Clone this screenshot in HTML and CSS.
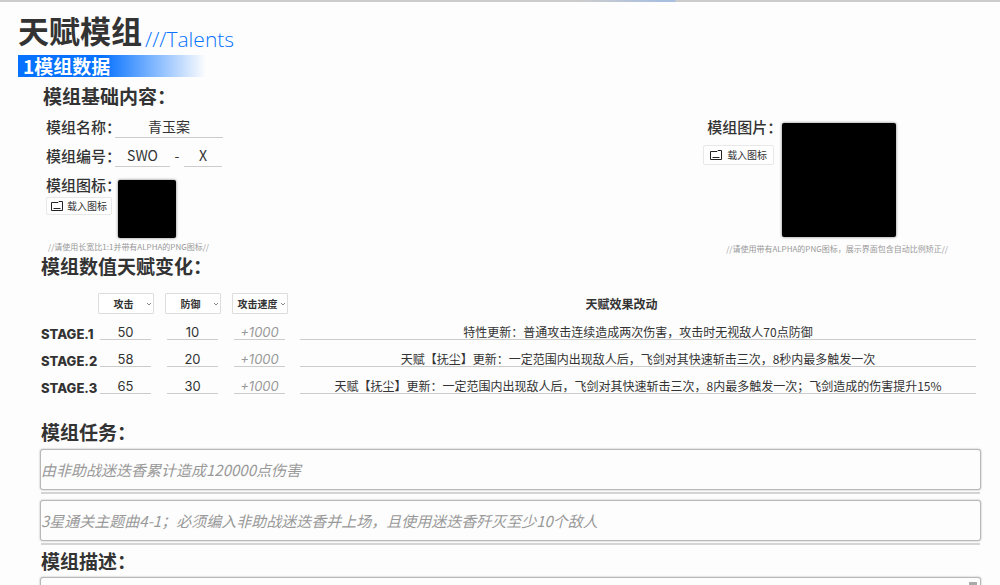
FILE: index.html
```html
<!DOCTYPE html>
<html lang="zh-CN">
<head>
<meta charset="utf-8">
<title>天赋模组</title>
<link rel="stylesheet" href="styles.css">
</head>
<body>
<div class="topline"></div>
<main class="page">
  <h1 class="title">天赋模组<span class="title-en">///Talents</span></h1>
  <h2 class="band">1模组数据</h2>

  <section class="basics">
    <div class="basics-left">
      <h3 class="heading heading-first">模组基础内容：</h3>
      <div class="field">
        <label class="label" for="name">模组名称：</label>
        <input class="line name" id="name" value="青玉案">
      </div>
      <div class="field">
        <label class="label" for="code">模组编号：</label>
        <input class="line code" id="code" value="SWO">
        <span class="dash">-</span>
        <input class="line suffix" aria-label="编号后缀" value="X">
      </div>
      <div class="upload">
        <div class="upload-side">
          <span class="label">模组图标：</span>
          <button class="load" type="button">
            <svg class="folder" viewBox="0 0 12 10"><path d="M.5 1.500h6.500l1-1h3.500v9h-11z"/><path d="M2.500 7.500h7" /></svg>载入图标
          </button>
        </div>
        <div class="preview small"></div>
      </div>
      <p class="note">//请使用长宽比1:1并带有ALPHA的PNG图标//</p>
    </div>

    <div class="basics-right">
      <div class="upload">
        <div class="upload-side wide">
          <span class="label">模组图片：</span>
          <button class="load roomy" type="button">
            <svg class="folder" viewBox="0 0 12 10"><path d="M.5 1.500h6.500l1-1h3.500v9h-11z"/><path d="M2.500 7.500h7" /></svg>载入图标
          </button>
        </div>
        <div class="preview large"></div>
      </div>
      <p class="note note-right">//请使用带有ALPHA的PNG图标，展示界面包含自动比例矫正//</p>
    </div>
  </section>

  <section class="block">
    <h3 class="heading heading-stats">模组数值天赋变化：</h3>
    <table class="stats">
      <thead>
        <tr>
          <td class="stage-col"></td>
          <th class="stat-col"><span class="pick"><select aria-label="属性一"><option>攻击</option></select><svg viewBox="0 0 6 4"><path d="M1 1l2 2 2-2"/></svg></span></th>
          <th class="stat-col"><span class="pick"><select aria-label="属性二"><option>防御</option></select><svg viewBox="0 0 6 4"><path d="M1 1l2 2 2-2"/></svg></span></th>
          <th class="stat-col"><span class="pick"><select aria-label="属性三"><option>攻击速度</option></select><svg viewBox="0 0 6 4"><path d="M1 1l2 2 2-2"/></svg></span></th>
          <th class="effect-head">天赋效果改动</th>
        </tr>
      </thead>
      <tbody>
        <tr>
          <th class="stage">STAGE.1</th>
          <td><input class="line stat" aria-label="阶段1 攻击" value="50"></td>
          <td><input class="line stat" aria-label="阶段1 防御" value="10"></td>
          <td><input class="line stat" aria-label="阶段1 攻击速度" placeholder="+1000"></td>
          <td class="effect-cell"><input class="line effect" aria-label="阶段1 天赋效果" value="特性更新：普通攻击连续造成两次伤害，攻击时无视敌人70点防御"></td>
        </tr>
        <tr>
          <th class="stage">STAGE.2</th>
          <td><input class="line stat" aria-label="阶段2 攻击" value="58"></td>
          <td><input class="line stat" aria-label="阶段2 防御" value="20"></td>
          <td><input class="line stat" aria-label="阶段2 攻击速度" placeholder="+1000"></td>
          <td class="effect-cell"><input class="line effect" aria-label="阶段2 天赋效果" value="天赋【抚尘】更新：一定范围内出现敌人后，飞剑对其快速斩击三次，8秒内最多触发一次"></td>
        </tr>
        <tr>
          <th class="stage">STAGE.3</th>
          <td><input class="line stat" aria-label="阶段3 攻击" value="65"></td>
          <td><input class="line stat" aria-label="阶段3 防御" value="30"></td>
          <td><input class="line stat" aria-label="阶段3 攻击速度" placeholder="+1000"></td>
          <td class="effect-cell"><input class="line effect" aria-label="阶段3 天赋效果" value="天赋【抚尘】更新：一定范围内出现敌人后，飞剑对其快速斩击三次，8内最多触发一次；飞剑造成的伤害提升15%"></td>
        </tr>
      </tbody>
    </table>
  </section>

  <section class="block tasks">
    <h3 class="heading">模组任务：</h3>
    <div class="task"><input class="box" aria-label="任务一" placeholder="由非助战迷迭香累计造成120000点伤害"></div>
    <div class="task"><input class="box" aria-label="任务二" placeholder="3星通关主题曲4-1；必须编入非助战迷迭香并上场，且使用迷迭香歼灭至少10个敌人"></div>
  </section>

  <section class="block">
    <h3 class="heading"><label for="desc">模组描述：</label></h3>
    <div class="desc-wrap">
      <textarea class="box desc" id="desc"></textarea>
      <span class="scroll-cap"></span>
    </div>
  </section>
</main>
</body>
</html>
```
FILE: styles.css
```css
* { box-sizing: border-box; }

html { height: 100%; overflow: hidden; }

body {
  height: 100%;
  margin: 0;
  overflow: hidden;
  background: #fdfdfd;
  color: #333;
  font-family: "Noto Sans CJK SC", sans-serif;
}

h1, h2, h3, p { margin: 0; }

button, input, select, textarea { font-family: inherit; color: inherit; }

.topline {
  height: 2px;
  background: linear-gradient(90deg, #ccc 58%, #a9bfe0 66%, #a9bfe0 67.5%, #ccc 67.6%);
}

.page { padding: 5px 19px 0 18px; }

.title {
  display: flex;
  align-items: flex-end;
  gap: 3px;
  margin-bottom: 3px;
  font-size: 31px;
  line-height: 45px;
}

.title-en {
  color: #0672ff;
  font-family: "Open Sans", sans-serif;
  font-size: 21px;
  font-weight: 300;
  line-height: 26px;
}

.band {
  width: 188px;
  padding-left: 5px;
  background: linear-gradient(90deg, #0672ff 45%, #fdfdfd);
  color: #fff;
  font-size: 19px;
  font-weight: 700;
  line-height: 22px;
}

.heading { font-size: 19px; font-weight: 700; line-height: 28px; }

.heading-first { margin-left: -3px; line-height: 37px; }

.heading-stats { line-height: 24px; }

.basics { display: flex; justify-content: space-between; }

.basics-left { padding-left: 28px; }

.basics-right { padding: 37px 33px 0 0; }

.field { display: flex; align-items: flex-start; height: 29px; }

.label {
  flex: none;
  width: 69px;
  font-size: 15px;
  font-weight: 500;
  line-height: 26px;
  white-space: nowrap;
}

.line {
  height: 24px;
  padding: 0;
  border: 0;
  border-bottom: 1px solid #ccc;
  background: transparent;
  text-align: center;
  font-size: 14px;
}

.name { width: 108px; }
.code { width: 55px; }
.suffix { width: 38px; }
.dash { width: 14px; text-align: center; font-size: 14px; line-height: 24px; }

.upload { display: flex; gap: 3px; }

.upload-side { display: flex; flex-direction: column; align-items: flex-start; }

.upload-side.wide { padding-left: 4px; }

.load {
  display: flex;
  align-items: center;
  gap: 4px;
  height: 18px;
  margin-top: -1px;
  padding: 0 4px;
  border: 1px solid #e8e8e8;
  border-radius: 2px;
  background: #fff;
  font-size: 10px;
  line-height: 16px;
}

.load.roomy { gap: 5px; height: 20px; margin: 5px 0 0 -4px; padding: 0 6px; }

.folder { width: 12px; height: 10px; fill: none; stroke: #222; stroke-width: 1; }

.preview {
  flex: none;
  border-radius: 2px;
  background: #000;
  box-shadow: 0 0 3px #777;
}

.small { width: 58px; height: 58px; margin-top: 8px; }
.large { width: 114px; height: 114px; margin: 9px 0 0 3px; }

.note { padding: 4px 0 0 2px; color: #999; font-size: 8px; line-height: 10px; }

.note-right { padding: 7px 0 0 23px; }

.block { padding-left: 23px; }

.stats {
  width: calc(100% - 5px);
  margin-top: 15px;
  border-collapse: collapse;
  table-layout: fixed;
}

.stats td, .stats th { height: 27px; padding: 0; text-align: center; vertical-align: top; }

.stats .stage-col { width: 51px; }
.stats .stat-col { width: 67px; }

.pick { position: relative; display: block; width: 56px; margin: 0 auto; }

.pick select {
  display: block;
  width: 100%;
  height: 21px;
  padding: 0 4px 0 0;
  border: 1px solid #ddd;
  border-radius: 1px;
  background: #fff;
  appearance: none;
  font-size: 10px;
  font-weight: 700;
  text-align: center;
  text-align-last: center;
}

.pick svg {
  position: absolute;
  top: 9px;
  right: 2px;
  width: 6px;
  height: 4px;
  fill: none;
  stroke: #888;
}

.effect-head { font-size: 12px; line-height: 21px; }

.stats .effect-head { padding-right: 26px; }

.stats .stage {
  padding-top: 3px;
  font-family: Inter, sans-serif;
  font-size: 13px;
  font-weight: 800;
  line-height: 22px;
  text-align: left;
  white-space: nowrap;
}

.stat, .effect { display: block; height: 20px; margin: 0 auto; padding-top: 4px; }

.stat { width: 51px; font-family: Inter, sans-serif; font-size: 13px; }

.effect { width: 100%; font-size: 12px; }

.stats .effect-cell { padding-left: 7px; }

::placeholder { color: #999; font-style: italic; opacity: 1; }

.tasks { padding-top: 17px; }

.tasks .heading { margin-bottom: 3px; }

.task {
  margin: 0 1px 6px 0;
  border-bottom: 2px solid #d4d4d4;
}

.task .box { margin: 0 -1px 2px; width: calc(100% + 2px); }

.task:last-child { margin-bottom: 2px; }

.box {
  display: block;
  height: 41px;
  padding: 0;
  border: 1px solid #b8b8b8;
  border-radius: 3px;
  background: #fdfdfd;
  box-shadow: 0 0 2px #aaa;
  font-size: 15px;
}

.desc-wrap { position: relative; margin: 2px 0 0 -1px; }

.desc { width: 100%; height: 100px; resize: none; }

.scroll-cap {
  position: absolute;
  top: 5px;
  right: 4px;
  width: 8px;
  height: 8px;
  background: #aaa;
}
```
